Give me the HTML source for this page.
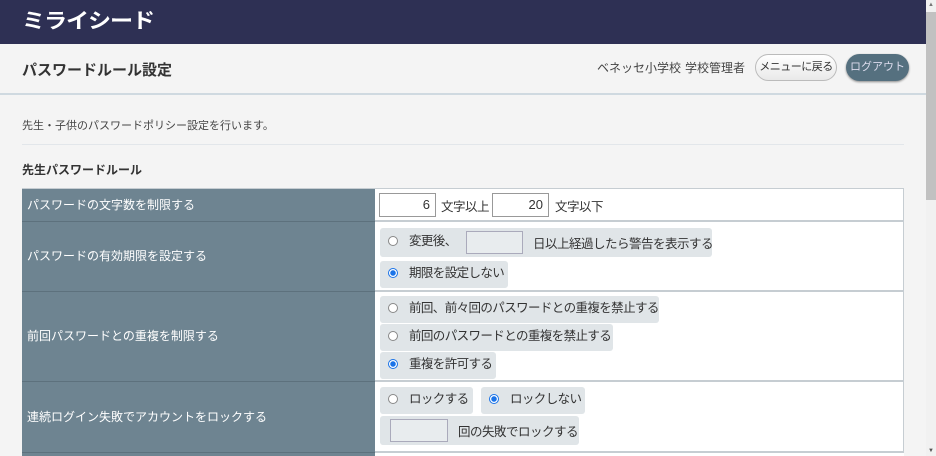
<!DOCTYPE html>
<html><head><meta charset="utf-8"><style>
*{box-sizing:border-box;margin:0;padding:0}
html,body{width:936px;height:456px;overflow:hidden}
body{background:#f4f4f4;font-family:"Liberation Sans","Noto Sans CJK JP",sans-serif;color:#333;position:relative;white-space:nowrap}
.a{position:absolute}
.hdr{left:0;top:0;width:926px;height:44px;background:#2e3054}
.logo{left:22px;top:9px;color:#fff;font-size:21px;font-weight:bold;letter-spacing:-1px;line-height:26px;transform:scaleX(1.1);transform-origin:left}
.sub{left:0;top:44px;width:926px;height:51px;background:#f4f4f4;border-bottom:2px solid #cfd9e0}
.btn{border-radius:14px;height:27px;font-size:11px;line-height:25px;text-align:center}
.sc{left:926px;top:0;width:10px;height:456px;background:#f1f1f1}
.th{left:926px;top:12px;width:10px;height:188px;background:#c1c1c1}
.lc{left:22px;background:#6e8491;color:#fff;font-size:12px;padding-left:5px;padding-bottom:2px;display:flex;align-items:center;border-bottom:1px solid #5d717d}
.rc{left:375px;width:529px;background:#fff;border-bottom:2px solid #c6cdd2;border-right:1px solid #c6cdd2}
.opt{background:#e0e5e8;border-radius:3px;height:27px;font-size:12.5px;line-height:25px;padding-left:8px;color:#333;letter-spacing:-0.6px}
.rad{display:inline-block;width:10px;height:10px;border:1px solid #888;border-radius:50%;background:#fff;vertical-align:-1px;margin-right:11px}
.rad.on{border-color:#1a73e8;background:radial-gradient(circle,#1a73e8 0 2.5px,#fff 3px)}
.in{background:#e8ecee;border:1px solid #aab;display:inline-block}
.t{font-size:12.5px;letter-spacing:-0.5px}
</style></head><body>
<div class="a hdr"></div>
<div class="a logo">ミライシード</div>
<div class="a sub"></div>
<div class="a" style="left:22px;top:59px;font-size:15px;font-weight:bold;color:#333">パスワードルール設定</div>
<div class="a" style="left:597px;top:59px;font-size:12px;color:#444">ベネッセ小学校</div>
<div class="a" style="left:685px;top:59px;font-size:12px;color:#444">学校管理者</div>
<div class="a btn" style="left:755px;top:54px;width:82px;background:linear-gradient(#fff,#e9e9e9);border:1px solid #bbb;color:#333;letter-spacing:-0.5px">メニューに戻る</div>
<div class="a btn" style="left:846px;top:54px;width:63px;background:#55707f;color:#dde;box-shadow:0 1px 2px #888;line-height:27px">ログアウト</div>
<div class="a" style="left:22px;top:117px;font-size:11px;color:#444">先生・子供のパスワードポリシー設定を行います。</div>
<div class="a" style="left:22px;top:144px;width:882px;height:1px;background:#e2e6ea"></div>
<div class="a" style="left:22px;top:161px;font-size:12px;font-weight:bold;color:#333">先生パスワードルール</div>

<div class="a" style="left:22px;top:188px;width:882px;height:1px;background:#c6cdd2"></div>
<div class="a lc" style="top:189px;width:353px;height:33px">パスワードの文字数を制限する</div>
<div class="a rc" style="top:189px;height:33px"></div>
<div class="a" style="left:379px;top:193px;width:57px;height:24px;border:1px solid #999;background:#fff;font-size:13px;text-align:right;padding-right:5px;line-height:22px">6</div>
<div class="a t" style="left:441px;top:196px">文字以上</div>
<div class="a" style="left:492px;top:193px;width:57px;height:24px;border:1px solid #999;background:#fff;font-size:13px;text-align:right;padding-right:5px;line-height:22px">20</div>
<div class="a t" style="left:555px;top:196px">文字以下</div>

<div class="a lc" style="top:222px;width:353px;height:70px">パスワードの有効期限を設定する</div>
<div class="a rc" style="top:222px;height:70px"></div>
<div class="a opt" style="left:380px;top:228px;width:332px;height:29px;line-height:27px"><span class="rad"></span>変更後、</div>
<div class="a in" style="left:466px;top:231px;width:57px;height:23px"></div>
<div class="a t" style="left:533px;top:233px">日以上経過したら警告を表示する</div>
<div class="a opt" style="left:380px;top:261px;width:128px"><span class="rad on"></span>期限を設定しない</div>

<div class="a lc" style="top:292px;width:353px;height:90px">前回パスワードとの重複を制限する</div>
<div class="a rc" style="top:292px;height:90px"></div>
<div class="a opt" style="left:380px;top:296px;width:279px"><span class="rad"></span>前回、前々回のパスワードとの重複を禁止する</div>
<div class="a opt" style="left:380px;top:324px;width:233px"><span class="rad"></span>前回のパスワードとの重複を禁止する</div>
<div class="a opt" style="left:380px;top:352px;width:116px"><span class="rad on"></span>重複を許可する</div>

<div class="a lc" style="top:382px;width:353px;height:71px">連続ログイン失敗でアカウントをロックする</div>
<div class="a rc" style="top:382px;height:71px"></div>
<div class="a opt" style="left:380px;top:387px;width:93px"><span class="rad"></span>ロックする</div>
<div class="a opt" style="left:481px;top:387px;width:104px"><span class="rad on"></span>ロックしない</div>
<div class="a opt" style="left:380px;top:416px;width:199px;height:29px"></div>
<div class="a in" style="left:390px;top:419px;width:58px;height:23px"></div>
<div class="a t" style="left:458px;top:421px">回の失敗でロックする</div>
<div class="a lc" style="top:453px;width:353px;height:3px;border:0;padding:0"></div>
<div class="a" style="left:375px;top:453px;width:529px;height:3px;background:#fff"></div>

<div class="a sc"></div>
<div class="a th"></div>
<div class="a" style="left:928px;top:2px;font-size:6px;color:#777">▲</div>
<div class="a" style="left:928px;top:448px;font-size:6px;color:#555">▼</div>
</body></html>
